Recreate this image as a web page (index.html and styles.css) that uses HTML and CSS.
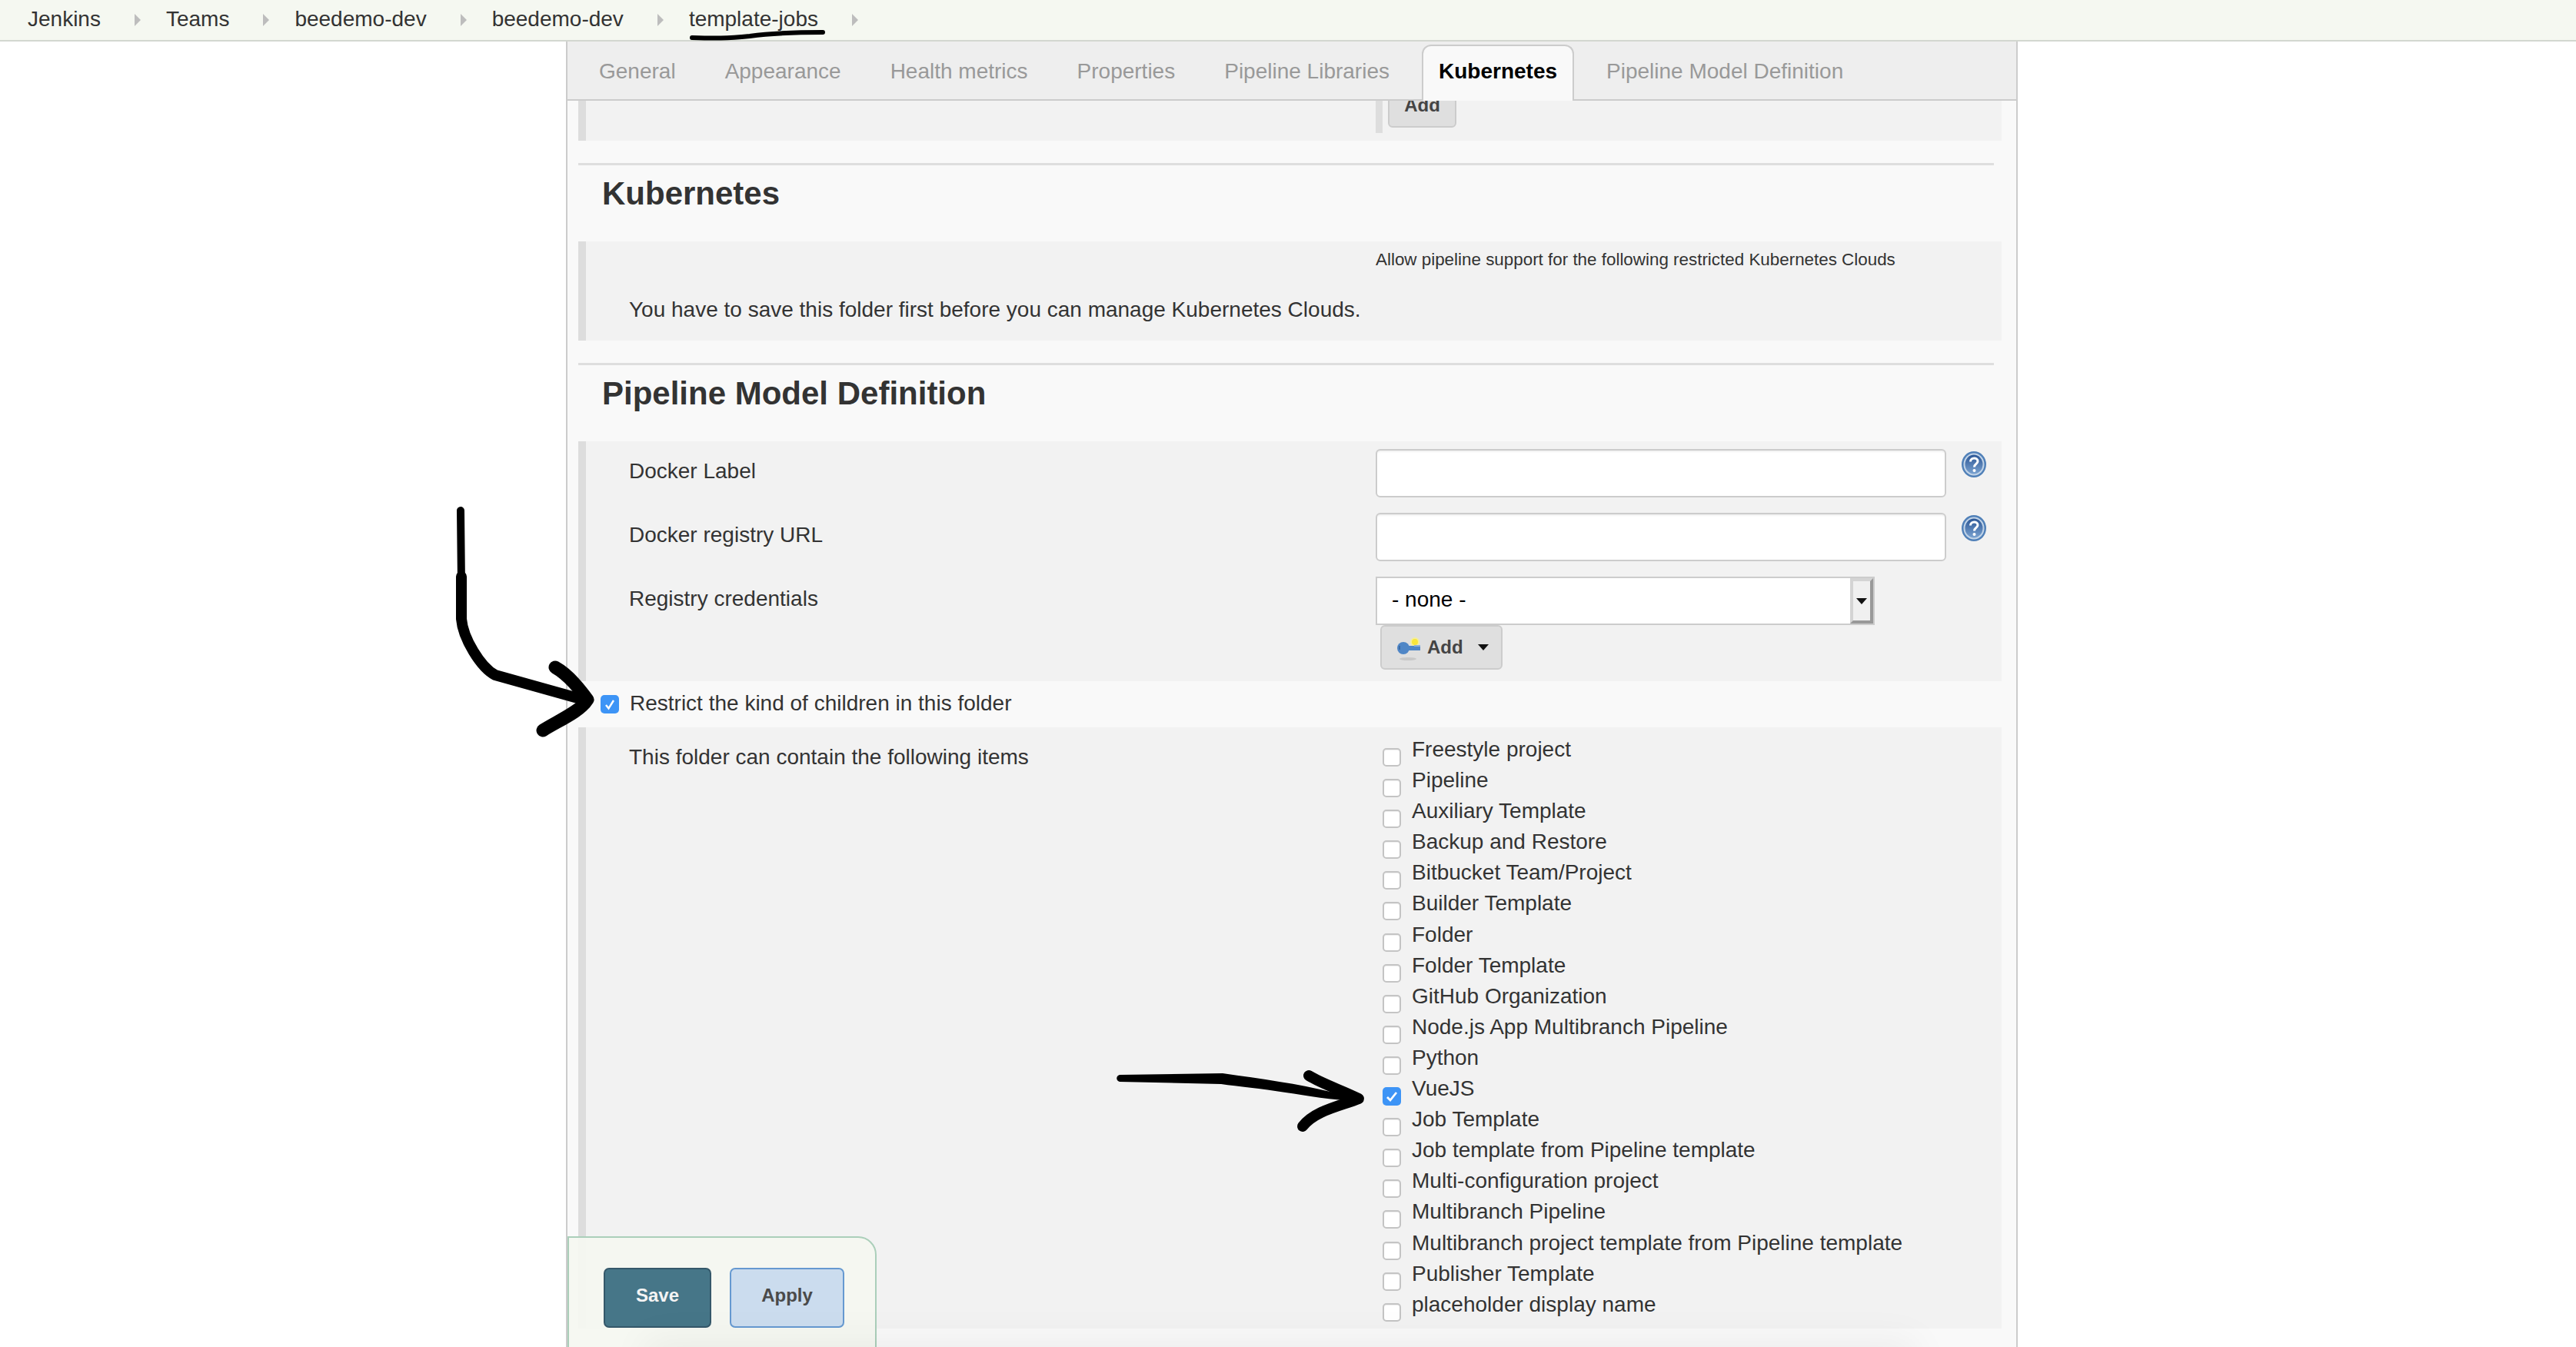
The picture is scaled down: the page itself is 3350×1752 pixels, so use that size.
FILE: index.html
```html
<!DOCTYPE html>
<html lang="en">
<head>
<meta charset="utf-8">
<title>template-jobs config</title>
<link rel="stylesheet" href="styles.css">
</head>
<body>
<nav class="crumbs">
  <a class="crumb">Jenkins</a><i class="sep"></i>
  <a class="crumb">Teams</a><i class="sep"></i>
  <a class="crumb">beedemo-dev</a><i class="sep"></i>
  <a class="crumb">beedemo-dev</a><i class="sep"></i>
  <a class="crumb">template-jobs</a><i class="sep"></i>
</nav>
<main class="panel">
  <div class="tabs">
    <span class="tab">General</span>
    <span class="tab">Appearance</span>
    <span class="tab">Health metrics</span>
    <span class="tab">Properties</span>
    <span class="tab">Pipeline Libraries</span>
    <span class="tab active">Kubernetes</span>
    <span class="tab">Pipeline Model Definition</span>
  </div>
  <div class="body">
    <section class="block block-top">
      <div class="right-bar"><span class="btn clipped">Add</span></div>
    </section>
    <hr class="rule rule-a">
    <h2 class="heading">Kubernetes</h2>
    <section class="block block-k8s">
      <p class="allow">Allow pipeline support for the following restricted Kubernetes Clouds</p>
      <p class="save-first">You have to save this folder first before you can manage Kubernetes Clouds.</p>
    </section>
    <hr class="rule rule-b">
    <h2 class="heading">Pipeline Model Definition</h2>
    <section class="block block-form">
      <div class="form-row">
        <label class="lbl">Docker Label</label>
        <input class="txt" type="text">
        <svg class="help" viewBox="0 0 32 34"><defs><linearGradient id="helpFill" x1="0" y1="0" x2="0" y2="1"><stop offset="0" stop-color="#2c5796"/><stop offset="1" stop-color="#7aa2d0"/></linearGradient></defs><ellipse cx="16" cy="17" rx="16" ry="17" fill="#5080b8"/><ellipse cx="16" cy="17" rx="13.500" ry="14.500" fill="#c2d4e8"/><ellipse cx="16" cy="17" rx="11.500" ry="12.500" fill="url(#helpFill)"/><path d="M11.500 13.500c0-6 9.500-6 9.500-.5 0 3.500-4.500 3.500-4.500 7.500" fill="none" stroke="#fff" stroke-width="3"/><circle cx="16.500" cy="25" r="2" fill="#fff"/></svg>
      </div>
      <div class="form-row">
        <label class="lbl">Docker registry URL</label>
        <input class="txt" type="text">
        <svg class="help" viewBox="0 0 32 34"><ellipse cx="16" cy="17" rx="16" ry="17" fill="#5080b8"/><ellipse cx="16" cy="17" rx="13.500" ry="14.500" fill="#c2d4e8"/><ellipse cx="16" cy="17" rx="11.500" ry="12.500" fill="url(#helpFill)"/><path d="M11.500 13.500c0-6 9.500-6 9.500-.5 0 3.500-4.500 3.500-4.500 7.500" fill="none" stroke="#fff" stroke-width="3"/><circle cx="16.500" cy="25" r="2" fill="#fff"/></svg>
      </div>
      <div class="form-row form-row-last">
        <label class="lbl">Registry credentials</label>
        <div class="cred">
          <div class="select"><span class="select-val">- none -</span><span class="select-btn"><i class="tri"></i></span></div>
          <span class="btn add-key">
            <svg class="key" viewBox="0 0 30 34"><ellipse cx="14" cy="30" rx="11" ry="2" fill="#c8c8c8"/><circle cx="23" cy="8" r="6" fill="#f4ee9c"/><circle cx="23" cy="8" r="4" fill="#f8e63a"/><ellipse cx="8" cy="16" rx="8" ry="8" fill="#4f86c6"/><rect x="10" y="13" width="20" height="6" fill="#4f86c6"/><rect x="22" y="12" width="8" height="2" fill="#8ab0dc"/><rect x="2" y="13" width="2" height="5" fill="#3a6aa5"/></svg>
            Add<i class="tri tri-m"></i>
          </span>
        </div>
      </div>
    </section>
    <div class="restrict">
      <span class="cb on"><svg viewBox="0 0 24 24"><path d="M7 13l3.500 4.500L17 7" fill="none" stroke="#fff" stroke-width="2.400"/></svg></span>
      <span class="restrict-text">Restrict the kind of children in this folder</span>
    </div>
    <section class="block block-items">
      <div class="lbl items-lbl">This folder can contain the following items</div>
      <ul class="items">
        <li><span class="cb"></span>Freestyle project</li>
        <li><span class="cb"></span>Pipeline</li>
        <li><span class="cb"></span>Auxiliary Template</li>
        <li><span class="cb"></span>Backup and Restore</li>
        <li><span class="cb"></span>Bitbucket Team/Project</li>
        <li><span class="cb"></span>Builder Template</li>
        <li><span class="cb"></span>Folder</li>
        <li><span class="cb"></span>Folder Template</li>
        <li><span class="cb"></span>GitHub Organization</li>
        <li><span class="cb"></span>Node.js App Multibranch Pipeline</li>
        <li><span class="cb"></span>Python</li>
        <li><span class="cb on"><svg viewBox="0 0 24 24"><path d="M6 13l4 4 8-10" fill="none" stroke="#fff" stroke-width="2.800"/></svg></span>VueJS</li>
        <li><span class="cb"></span>Job Template</li>
        <li><span class="cb"></span>Job template from Pipeline template</li>
        <li><span class="cb"></span>Multi-configuration project</li>
        <li><span class="cb"></span>Multibranch Pipeline</li>
        <li><span class="cb"></span>Multibranch project template from Pipeline template</li>
        <li><span class="cb"></span>Publisher Template</li>
        <li><span class="cb"></span>placeholder display name</li>
      </ul>
    </section>
  </div>
  <div class="sticker">
    <span class="action save">Save</span>
    <span class="action apply">Apply</span>
  </div>
  <div class="bottom-shade"></div>
</main>
<svg class="ink" viewBox="0 0 3350 1752">
  <path class="ink-line" d="M900 49C930 50 945 50 975 47C1005 43 1030 42 1070 42" stroke-width="6"/>
  <path class="ink-line" d="M599 664L600 760" stroke-width="10"/>
  <path class="ink-line" d="M600 750L600 805C602 830 625 868 644 878L762 911" stroke-width="14"/>
  <path class="ink-line" d="M722 868C740 878 755 898 764 910C755 925 725 938 706 950" stroke-width="17"/>
  <path class="ink-fill" d="M1456 1398L1590 1396C1640 1403 1690 1410 1730 1420L1770 1428L1770 1432C1730 1431 1700 1425 1672 1421C1640 1416 1610 1413 1588 1410L1456 1407C1451 1406 1451 1399 1456 1398Z"/>
  <path class="ink-line" d="M1702 1399C1720 1410 1745 1418 1767 1429C1745 1438 1710 1444 1694 1465" stroke-width="14"/>
</svg>
</body>
</html>
```
FILE: styles.css
```css
* { box-sizing: border-box; }
html, body { margin: 0; height: 1752px; overflow: hidden; background: #fff; }
body { font: 28px/32px "Liberation Sans", Arial, sans-serif; color: #333; position: relative; }

.crumbs { height: 54px; background: #f5f8f1; border-bottom: 2px solid #d3d7d0; display: flex; align-items: center; padding: 0 0 2px 36px; }
.crumb { color: #333; }
.sep { width: 0; height: 0; margin: 2px 33px 0 44px; border-left: 8px solid #bdbdbd; border-top: 8px solid transparent; border-bottom: 8px solid transparent; }

.panel { position: relative; margin-left: 736px; width: 1888px; height: 1698px; background: #f9f9f9; border-left: 2px solid #ccc; border-right: 2px solid #ccc; overflow: hidden; }

.tabs { position: relative; z-index: 2; height: 77px; background: #eee; border-bottom: 2px solid #ccc; display: flex; align-items: flex-end; padding-left: 19px; gap: 20px; }
.tab { height: 71px; padding: 0 20px; border: 2px solid transparent; border-bottom: 0; color: #999; line-height: 65px; white-space: nowrap; }
.tab.active { background: #f9f9f9; border-color: #ccc; border-radius: 12px 12px 0 0; color: #000; font-weight: 700; margin-bottom: -2px; height: 73px; line-height: 66px; }

.body { padding-left: 14px; width: 1865px; }
.block { background: #f2f2f2; border-left: 10px solid #ddd; }
.block-top { height: 52px; }
.right-bar { display: flex; align-items: flex-start; margin-left: 1027px; height: 42px; border-left: 9px solid #ddd; padding-left: 7px; }
.btn { display: flex; align-items: center; background: #dfdfdf; border: 2px solid #ccc; border-radius: 6px; color: #444; font-weight: 700; font-size: 24px; }
.clipped { width: 89px; height: 58px; margin-top: -23px; justify-content: center; flex: none; }

.rule { margin: 0; border: 0; height: 3px; background: #dedede; width: 1841px; }
.rule-a { margin-top: 29px; }
.rule-b { margin-top: 29px; }
.heading { margin: 0; height: 99px; padding: 13px 0 0 31px; font-size: 42px; line-height: 48px; font-weight: 700; color: #333; }

.block-k8s { height: 129px; padding-left: 56px; position: relative; }
.allow { margin: 0; position: absolute; left: 1027px; top: 11px; font-size: 22.400px; line-height: 26px; }
.save-first { margin: 0; padding-top: 73px; }

.block-form { height: 312px; padding-top: 10px; }
.form-row { display: flex; height: 83px; }
.form-row-last { height: auto; }
.lbl { display: block; width: 1027px; padding: 13px 0 0 56px; flex: none; }
.txt { width: 742px; height: 63px; background: #fff; border: 2px solid #ccc; border-radius: 6px; box-shadow: inset 0 4px 3px -3px #e8e8e8; padding: 0; flex: none; }
.help { width: 32px; height: 34px; margin: 3px 0 0 20px; flex: none; }

.cred { display: flex; flex-direction: column; align-items: flex-start; }
.select { width: 649px; height: 63px; background: #fff; border: 2px solid #ccc; display: flex; align-items: center; justify-content: space-between; }
.select-val { color: #000; padding: 0 0 4px 19px; }
.select-btn { width: 30px; height: 59px; background: #f0f0f0; border: 4px solid; border-color: #d4d4d4 #999 #999 #d4d4d4; display: flex; align-items: center; justify-content: center; }
.tri { display: block; width: 0; height: 0; border-left: 7px solid transparent; border-right: 7px solid transparent; border-top: 8px solid #111; }
.add-key { width: 159px; height: 58px; margin-left: 6px; padding-left: 20px; }
.key { width: 30px; height: 34px; margin: 4px 9px 0 0; flex: none; }
.tri-m { margin-left: 19px; }

.restrict { height: 60px; display: flex; align-items: center; padding-left: 29px; }
.restrict-text { margin-left: 14px; padding-bottom: 2px; }

.cb { display: block; width: 24px; height: 24px; background: #fff; border: 2px solid #c4c4c4; border-radius: 5px; flex: none; box-shadow: inset 0 1px 1px #eee; }
.cb.on { background: #3d94f6; border: 0; box-shadow: none; }
.cb svg { display: block; width: 24px; height: 24px; }
.restrict .cb { margin-bottom: 1px; }

.block-items { height: 782px; display: flex; }
.items-lbl { padding-top: 23px; }
.items { list-style: none; margin: 0; padding: 13px 0 0 9px; }
.items li { display: flex; align-items: flex-start; height: 40.100px; color: #333; white-space: nowrap; }
.items .cb { margin: 14px 14px 0 0; }

.bottom-shade { position: absolute; left: 110px; right: 140px; bottom: -40px; height: 40px; background: #ddd; box-shadow: 0 0 50px 10px rgba(0, 0, 0, .05); z-index: 3; }

.sticker { position: absolute; left: 0; bottom: -20px; width: 402px; height: 164px; background: rgba(245, 248, 241, .93); border: 2px solid #abcfba; border-radius: 0 24px 0 0; padding: 39px 0 0 45px; display: flex; align-items: flex-start; gap: 24px; }
.action { height: 78px; border: 2px solid; border-radius: 7px; font-size: 24px; font-weight: 700; display: flex; align-items: center; justify-content: center; padding-bottom: 6px; }
.save { width: 140px; background: #467688; border-color: #35586a; color: #f4f4f4; }
.apply { width: 149px; background: #cbdcee; border-color: #6699d1; color: #4a4a4a; }

.ink { position: absolute; left: 0; top: 0; width: 3350px; height: 1752px; pointer-events: none; z-index: 5; }
.ink-line { fill: none; stroke: #000; stroke-linecap: round; stroke-linejoin: round; }
.ink-fill { fill: #000; }
```
